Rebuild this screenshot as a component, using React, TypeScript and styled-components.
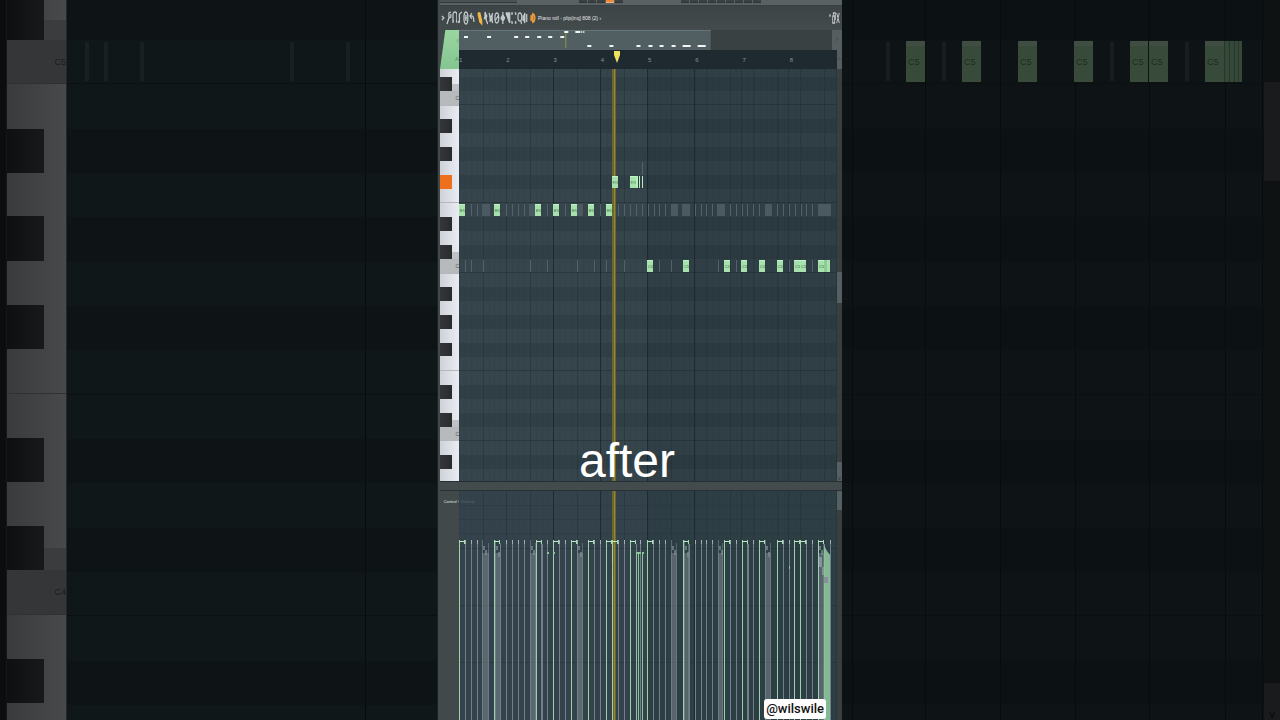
import React from "react";
import styled, { createGlobalStyle } from "styled-components";

const GlobalStyle = createGlobalStyle`
  * { box-sizing: border-box; }
  body { margin: 0; background: #0c1113; font-family: "Liberation Sans", Arial, sans-serif; }
  button { border: 0; padding: 0; background: none; color: inherit; font: inherit; }
`;

const NARROW = '"Liberation Sans Narrow", "Liberation Sans", Arial, sans-serif';

/* ---------- data ---------- */

type KeyKind = "white" | "black" | "c" | "cs" | "active" | "f";
interface KeyRow { kind: KeyKind; size: number; label?: string }

const OCTAVE: KeyKind[] = ["cs", "c", "white", "black", "white", "black", "white", "black", "f", "white", "black", "white"];

function buildRows(first: number, size: number, count: number, last: number, octave: number, active = -1): KeyRow[] {
  const rows: KeyRow[] = [];
  let name = octave;
  for (let i = 0; i < count; i++) {
    const kind = OCTAVE[i % 12];
    const row: KeyRow = { kind: i === active ? "active" : kind, size };
    if (kind === "c") row.label = "C" + name--;
    rows.push(row);
  }
  if (first > 0) rows.unshift({ kind: "white", size: first });
  rows[rows.length - 1].size = last;
  return rows;
}

const MAIN_ROWS = buildRows(8, 14, 29, 12, 6, 7).map(r => (r.label ? { ...r, label: "C" } : r));
const BACK_ROWS = buildRows(0, 44, 17, 17, 5).map((r, i) =>
  i === 0 ? { ...r, size: 40 } : i === 16 ? r : { ...r, size: i % 3 === 2 ? 45 : 44 }
);

const isDark = (k: KeyKind) => k === "black" || k === "cs" || k === "active";

const BARS = [47, 94, 141, 188, 235, 282, 329, 377];
const BEATS = [24, 71, 118, 165, 212, 247, 271, 294, 318, 341, 365];

const NOTES = [
  { y: 107, name: "F#5", xs: [153, 171] },
  { y: 135, name: "E5", xs: [0, 35, 76, 94, 112, 129, 147] },
  { y: 191, name: "C5", xs: [188, 224, 265, 282, 300, 318, 335, 341, 359] },
];
const SHORT_NOTES = [177, 180, 183];
const GHOST_TOP = [12, 18, 47, 53, 59, 65, 88, 106, 141, 159, 165, 171, 177, 183, 189, 195, 200, 206, 236, 242, 247, 253, 271, 277, 283, 288, 294, 300, 318, 324, 330, 336, 342, 347, 353];
const GHOST_TOP_WIDE = [[23, 8], [70, 6], [118, 6], [212, 7], [223, 8], [258, 8], [306, 7], [359, 13]];
const GHOST_LOW = [6, 12, 24, 71, 88, 118, 135, 147, 153, 165, 200, 212, 259, 277, 330, 353];

const STEMS = [6, 12, 18, 47, 53, 59, 65, 82, 88, 100, 106, 118, 135, 141, 159, 165, 181, 194, 200, 206, 236, 242, 247, 253, 271, 277, 288, 294, 324, 330, 341, 347, 353, 371];
const GREEN_STEMS = [0, 35, 77, 94, 112, 129, 147, 153, 171, 188, 224, 265, 283, 300, 318, 335, 341, 359];
const BANDS = [[23, 7], [36, 6], [71, 6], [118, 6], [212, 6], [225, 5], [259, 5], [306, 6], [359, 6]];

const PREVIEW_HIGH = [5, 28, 55, 66, 78, 89, 101];
const PREVIEW_LOW = [[128, 4], [150, 4], [177, 4], [189, 4], [200, 4], [212, 4], [223, 8], [238, 8]];

/* ---------- page ---------- */

const Stage = styled.main`
  display: grid;
  grid-template-columns: minmax(0, 1fr) minmax(0, 404px) minmax(0, 1fr);
  min-height: 100vh;
  overflow: hidden;
`;

const Backdrop = styled.section`
  display: flex;
  min-width: 0;
  background: #0d1315;
`;

const Drawing = styled.svg`
  display: block;
  flex: 1;
  min-width: 0;
  width: 100%;
  height: 100%;
`;

const CanvasCell = styled.div`
  position: relative;
  flex: 1;
  min-width: 0;
  > svg { position: absolute; inset: 0; }
`;

const BackEdge = styled.div`
  flex: 0 0 7px;
  background: #0b0d0e;
  border-right: 1px solid #141718;
`;

/* ---------- keyboard ---------- */

const Keyboard = styled.div<{ $dim?: boolean }>`
  display: flex;
  flex-direction: column;
  flex: 0 0 ${p => (p.$dim ? 60 : 19)}px;
  min-width: 0;
  background: ${p => (p.$dim ? "linear-gradient(90deg, #3a3b3c, #48494b)" : "linear-gradient(90deg, #ced2d8, #e9ecf2)")};
  border-right: ${p => (p.$dim ? "1px solid #23282a" : "0")};
`;

const Key = styled.div<{ $kind: KeyKind; $size: number; $dim?: boolean }>`
  display: flex;
  align-items: center;
  justify-content: space-between;
  flex: ${p => p.$size} 0 0;
  min-height: 0;
  background: ${p => {
    const shade = p.$dim ? "#353637" : "#b7babd";
    if (p.$kind === "c") return shade;
    if (p.$kind === "cs") return `linear-gradient(transparent 50%, ${p.$dim ? "#3b3c3d" : "#bfc2c5"} 50%)`;
    return "none";
  }};
  border-bottom: ${p => (p.$kind === "c" || p.$kind === "f" ? `1px solid ${p.$dim ? "#303132" : "#b4b7ba"}` : "0")};
`;

const BlackKey = styled.span<{ $on?: boolean; $dim?: boolean }>`
  align-self: stretch;
  width: 63%;
  background: ${p => (p.$on ? "#ee6f1c" : p.$dim ? "linear-gradient(90deg, #0e0f10, #18191a)" : "linear-gradient(90deg, #343639, #2a2b2d)")};
`;

const KeyName = styled.span<{ $dim?: boolean }>`
  margin-left: auto;
  white-space: nowrap;
  font: ${p => (p.$dim ? "9px" : "5px")}/12px ${NARROW};
  color: ${p => (p.$dim ? "#1b1c1d" : "#55585b")};
`;

function Keys({ rows, dim }: { rows: KeyRow[]; dim?: boolean }) {
  return (
    <Keyboard $dim={dim}>
      {rows.map((r, i) => (
        <Key key={i} $kind={r.kind} $size={r.size} $dim={dim}>
          {isDark(r.kind) && <BlackKey $on={r.kind === "active"} $dim={dim} />}
          {r.label && <KeyName $dim={dim}>{r.label}</KeyName>}
        </Key>
      ))}
    </Keyboard>
  );
}

function Lanes({ rows, width, light, dark, line }: { rows: KeyRow[]; width: number; light: string; dark: string; line: string }) {
  let y = 0;
  return (
    <g shapeRendering="crispEdges">
      {rows.map((r, i) => {
        const top = y;
        y += r.size;
        return (
          <g key={i}>
            <rect x={0} y={top} width={width} height={r.size} fill={isDark(r.kind) ? dark : light} />
            {(r.kind === "c" || r.kind === "f") && <rect x={0} y={top + r.size - 1} width={width} height={1} fill={line} />}
          </g>
        );
      })}
    </g>
  );
}

/* ---------- plugin window ---------- */

const Window = styled.section`
  position: relative;
  display: flex;
  flex-direction: column;
  min-width: 0;
  padding-left: 2px;
  background: #42494b;
  border-left: 1px solid #1b2022;
  margin-left: -1px;
`;

const HostBar = styled.div`
  display: flex;
  align-items: flex-start;
  height: 6px;
  background: #596163;
  border-bottom: 1px solid #3a4042;
`;

const HostSlot = styled.span`
  width: 77px;
  height: 3px;
  background: #4c5355;
  border-bottom: 1px solid #33393b;
`;

const HostSteps = styled.div<{ $left: number }>`
  display: flex;
  gap: 1px;
  margin-left: ${p => p.$left}px;
`;

const HostStep = styled.span<{ $on?: boolean }>`
  width: 8px;
  height: 3px;
  background: ${p => (p.$on ? "#f08a3c" : "#3b4143")};
  border-bottom: 1px solid ${p => (p.$on ? "#f6b27c" : "#2f3436")};
`;

const Toolbar = styled.header`
  display: flex;
  align-items: center;
  height: 24px;
  background: linear-gradient(#3d4446, #444b4d);
`;

const Tools = styled.div<{ $width: number }>`
  display: flex;
  width: ${p => p.$width}px;
  margin-right: 2px;
`;

const Tool = styled.button<{ $tint?: string }>`
  flex: 1;
  min-width: 0;
  height: 16px;
  color: ${p => p.$tint ?? "#c3c9ca"};
  svg { display: block; width: 100%; height: 16px; fill: none; stroke: currentColor; }
`;

const Title = styled.h1`
  flex: 1;
  margin: 0;
  font: 400 5px/12px ${NARROW};
  color: #e2e6e7;
  white-space: nowrap;
`;

const Header = styled.div`
  display: flex;
  height: 39px;
`;

const Tab = styled.button`
  display: flex;
  flex-direction: column;
  justify-content: space-around;
  flex: 0 0 19px;
  text-align: right;
  font-size: 6px;
  line-height: 10px;
  color: #5a9465;
  background: linear-gradient(#9ad6a2, #84c590);
  clip-path: polygon(28% 0, 100% 0, 100% 100%, 0 100%);
`;

const HeaderTracks = styled.div`
  display: flex;
  flex-direction: column;
  flex: 1;
  min-width: 0;
`;

const Overview = styled.div`
  display: flex;
  height: 20px;
  background: #3a4143;
`;

const ScrollButton = styled.button<{ $width: number }>`
  flex: 0 0 ${p => p.$width}px;
  background: #565e60;
  color: #3a4143;
  font-size: 7px;
  line-height: 8px;
`;

const Ruler = styled.div`
  display: flex;
  height: 19px;
  background: #1e2a30;
`;

const RulerTrack = styled.div`
  position: relative;
  display: flex;
  flex: 1;
  min-width: 0;
`;

const BarNumber = styled.span`
  flex: 1;
  min-width: 0;
  padding-top: 1px;
  font: 6px/19px ${NARROW};
  color: #84939a;
`;

const Marker = styled.svg`
  position: absolute;
  left: 41%;
  top: 1px;
  width: 6px;
  height: 12px;
`;

const Roll = styled.div`
  display: flex;
  flex: 1;
  min-height: 0;
`;

const Divider = styled.div`
  height: 9px;
  background: #444b4c;
  border-top: 1px solid #262f33;
`;

const Control = styled.div`
  display: flex;
  height: 230px;
  border-top: 1px solid #263036;
`;

const ControlSide = styled.div`
  width: 19px;
  flex: none;
  padding-top: 5px;
  text-align: right;
  background: #42494b;
  font: 4px/12px ${NARROW};
  color: #dfe3e4;
  white-space: nowrap;
`;

const VelocityName = styled.span`
  position: absolute;
  left: 2px;
  top: 5px;
  font: 4px/12px ${NARROW};
  color: #566770;
`;

const Scrollbar = styled.div<{ $wide?: boolean }>`
  display: flex;
  flex-direction: column;
  flex: 0 0 ${p => (p.$wide ? 16 : 5)}px;
  background: ${p => (p.$wide ? "#0e1212" : "#393f41")};
`;

const Spacer = styled.div<{ $grow: number }>`
  flex: ${p => p.$grow} 0 0;
`;

const Thumb = styled.div<{ $grow: number; $dim?: boolean }>`
  flex: ${p => p.$grow} 0 0;
  display: flex;
  align-items: flex-end;
  justify-content: center;
  font-size: ${p => (p.$dim ? 10 : 6)}px;
  color: ${p => (p.$dim ? "#050707" : "#30373a")};
  background: ${p => (p.$dim ? "#191b1c" : "#566063")};
`;

const Caption = styled.p`
  position: absolute;
  left: 0;
  right: 26px;
  bottom: 231px;
  margin: 0;
  text-align: center;
  font: 48px/56px "Liberation Sans", Arial, sans-serif;
  color: #fff;
`;

const Handle = styled.a`
  position: absolute;
  right: 16px;
  bottom: 1px;
  padding: 0 2px;
  border-radius: 3px;
  background: #fff;
  color: #111;
  font: 500 13px/20px Roboto, "Liberation Sans", sans-serif;
  text-decoration: none;
`;

const LEFT_TOOLS = [
  { name: "Menu", d: "M2 6l2 2-2 2" },
  { name: "Tools", d: "M1 14l2-6M3 8V3l2-1M5 4v3L3 8" },
  { name: "Snap", d: "M1 13V5q0-3 2-3t2 3v8M1 11h1M4 11h1" },
  { name: "Stamp", d: "M1 12h1.500V4L5 2M1 11l1 2" },
  { name: "Ghost notes", d: "M3 2q-2 0-2 6t2 6 2-6-2-6M3 5v6M2 8h2" },
  { name: "Undo", d: "M3 3L1 6l2 3M1 6h2q2 0 2 6" },
];
const EDIT_TOOLS = [
  { name: "Draw", d: "M1 3l2 0 2 8v3L3 12 1 3M2 6h2M3 9h2", tint: "#f0b64a", solid: true },
  { name: "Paint", d: "M2 2l2 4-1 3 2 5M1 9l2-2-1-5", solid: true },
  { name: "Slice", d: "M1 3l2 5-1 4M5 3L3 8l2 5", solid: true },
  { name: "Mute", d: "M3 3q-2 0-2 5t2 5 2-5-2-5M1 11l4-6" },
  { name: "Slip", d: "M3 2v12M1 8l2-3 2 3-2 3z", solid: true },
  { name: "Cut", d: "M1 3h4v10M1 3l4 10M3 3l2 5", solid: true },
  { name: "Select", d: "M1 5V3h1M4 3h1v2M5 11v2H4M2 13H1v-2" },
  { name: "Zoom", d: "M3 3q-2 0-2 4t2 4 2-4-2-4M4 11l1 3" },
  { name: "Playback", d: "M1 6v4h1l1 3V3L2 6zM5 4v8", solid: true },
];

function ToolButton({ name, d, tint, solid }: { name: string; d: string; tint?: string; solid?: boolean }) {
  return (
    <Tool type="button" aria-label={name} $tint={tint}>
      <svg viewBox="0 0 6 16" preserveAspectRatio="none">
        <path d={d} fill={solid ? "currentColor" : "none"} strokeWidth={1.3} />
      </svg>
    </Tool>
  );
}

function Playhead({ height }: { height: number }) {
  return (
    <g>
      <rect x={153} y={0} width={4} height={height} fill="#6c672d" />
      <rect x={155} y={0} width={1} height={height} fill="#8f8732" />
    </g>
  );
}

function GridLines({ height }: { height: number }) {
  return (
    <g shapeRendering="crispEdges">
      {Array.from({ length: 64 }, (_, i) => (
        <rect key={i} x={Math.round(i * 5.9)} y={0} width={1} height={height} fill="#1c2a31" opacity={0.07} />
      ))}
      {BEATS.map(x => <rect key={x} x={x} y={0} width={1} height={height} fill="#1c2a31" opacity={0.3} />)}
      {BARS.map((x, i) => <rect key={x} x={x} y={0} width={1} height={height} fill="#1a262c" opacity={i > 0 && i < 5 ? 0.8 : 0.3} />)}
    </g>
  );
}

function NoteCanvas() {
  return (
    <Drawing viewBox="0 0 378 412" preserveAspectRatio="none" role="img" aria-label="Notes">
      <Lanes rows={MAIN_ROWS} width={378} light="#36444b" dark="#303e46" line="#2a373e" />
      <rect x={188} y={0} width={190} height={412} fill="#1c2c34" opacity={0.24} />
      <GridLines height={412} />
      <g fill="#52616a">
        {GHOST_TOP.map(x => <rect key={x} x={x} y={135} width={1} height={12} />)}
        {GHOST_LOW.map(x => <rect key={x} x={x} y={191} width={1} height={12} />)}
        <rect x={183} y={93} width={1} height={13} />
      </g>
      {GHOST_TOP_WIDE.map(([x, w]) => <rect key={x} x={x} y={135} width={w} height={12} fill="#4b5a61" />)}
      <Playhead height={412} />
      {NOTES.map(row => row.xs.map(x => (
        <g key={x}>
          <rect x={x} y={row.y} width={6} height={12} fill="#a5e2ac" />
          <rect x={x} y={row.y} width={6} height={1} fill="#c3f0c7" />
          <text x={x + 1} y={row.y + 8} fontSize={row.name.length > 2 ? 3 : 4} fontFamily={NARROW} fill="#35603e">{row.name}</text>
        </g>
      )))}
      <g fill="#b5edbb">
        {SHORT_NOTES.map(x => <rect key={x} x={x} y={107} width={x === 177 ? 2 : 1} height={12} />)}
        <rect x={365} y={191} width={3} height={12} fill="#8fcb97" />
        <rect x={368} y={191} width={3} height={12} fill="#a5e2ac" />
      </g>
    </Drawing>
  );
}

function VelocityCanvas() {
  return (
    <Drawing viewBox="0 0 378 229" preserveAspectRatio="none" role="img" aria-label="Velocities">
      <rect width={378} height={229} fill="#34434b" />
      <rect x={188} width={190} height={229} fill="#1c2c34" opacity={0.24} />
      <GridLines height={229} />
      {[14, 28, 42, 57, 114, 171].map(y => <rect key={y} x={0} y={y} width={378} height={1} fill="#1f2c33" opacity={y > 42 ? 0.45 : 0.2} />)}
      {BANDS.map(([x, w], i) => (
        <g key={x} fill="#7f8e96">
          <rect x={x} y={62} width={w} height={167} opacity={0.5} />
          <rect x={x} y={49} width={1} height={180} opacity={0.6} />
          <rect x={x + w - 1} y={52} width={1} height={177} opacity={0.5} />
          <rect x={x + 1} y={55} width={2} height={4} opacity={0.7} />
          <rect x={x + 3} y={59 + (i % 2) * 2} width={2} height={5} opacity={0.7} />
        </g>
      ))}
      {STEMS.map(x => (
        <g key={x}>
          <rect x={x} y={50} width={1} height={179} fill="#71818a" />
          <rect x={x} y={49} width={1} height={4} fill="#a0afb3" />
        </g>
      ))}
      <Playhead height={229} />
      {GREEN_STEMS.map(x => (
        <g key={x} fill="#9bd2a9">
          <rect x={x} y={49} width={1} height={180} />
          <rect x={x} y={50} width={6} height={1} fill="#b5eebd" />
          <rect x={x + 5} y={49} width={1} height={4} fill="#a9dcb4" />
          <rect x={x + 6} y={53} width={1} height={176} fill="#71818a" />
        </g>
      ))}
      <g fill="#8fc59c">
        {[177, 179, 183].map(x => <rect key={x} x={x} y={61} width={1} height={168} />)}
        {[177, 180, 183, 88, 94].map(x => <rect key={x} x={x} y={61} width={2} height={2} />)}
        <rect x={153} y={75} width={1} height={3} />
        <rect x={330} y={75} width={1} height={3} />
        <path d="M365 54l3 6 3 4v165h-6z" opacity={0.9} />
        <path d="M360 66h3v10h2v10h4v6h-4v-8h-2v-8h-3z" fill="#84939a" />
      </g>
    </Drawing>
  );
}

function OverviewCanvas() {
  return (
    <Drawing viewBox="0 0 372 20" preserveAspectRatio="none" role="img" aria-label="Overview">
      <rect width={251} height={20} fill="#525f62" />
      <rect width={251} height={1} fill="#66757a" />
      <rect x={106} y={3} width={1} height={15} fill="#8f9140" />
      <g fill="#f1f6f4">
        {PREVIEW_HIGH.map(x => <rect key={x} x={x} y={6} width={4} height={2} />)}
        {PREVIEW_LOW.map(([x, w]) => <rect key={x} x={x} y={15} width={w} height={2} />)}
        <rect x={105} y={1} width={4} height={2} />
        <rect x={116} y={1} width={5} height={2} />
        <rect x={122} y={1} width={1} height={2} />
        <rect x={124} y={1} width={1} height={2} />
      </g>
    </Drawing>
  );
}

function BackLeft() {
  return (
    <Backdrop aria-hidden="true">
      <BackEdge />
      <Keys rows={BACK_ROWS} dim />
      <CanvasCell>
        <Drawing viewBox="0 0 371 720" preserveAspectRatio="none">
          <Lanes rows={BACK_ROWS} width={371} light="#101719" dark="#0e1416" line="#0b1113" />
          <rect x={298} y={0} width={1} height={720} fill="#080c0e" />
          {[18, 37, 73, 223, 279].map(x => <rect key={x} x={x} y={42} width={4} height={39} fill="#192022" />)}
        </Drawing>
      </CanvasCell>
    </Backdrop>
  );
}

function BackRight() {
  return (
    <Backdrop aria-hidden="true">
      <CanvasCell>
        <Drawing viewBox="0 0 422 720" preserveAspectRatio="none">
          <Lanes rows={BACK_ROWS} width={422} light="#0e1416" dark="#0c1113" line="#0a0f11" />
          {[10, 83, 158, 233, 307, 383, 420].map(x => <rect key={x} x={x} y={0} width={1} height={720} fill="#080c0d" />)}
          {[44, 100, 268, 343].map(x => <rect key={x} x={x} y={42} width={4} height={39} fill="#181e20" />)}
          {[64, 120, 176, 232, 288, 307, 363].map(x => (
            <g key={x}>
              <rect x={x} y={41} width={x === 288 ? 18 : 19} height={41} fill="#384b3b" />
              <rect x={x} y={41} width={x === 288 ? 18 : 19} height={5} fill="#3f4d42" />
              <text x={x + 2} y={65} fontSize={9} fontFamily={NARROW} fill="#1d2d20">C5</text>
            </g>
          ))}
          <rect x={382} y={41} width={18} height={41} fill="#35483a" />
          {[382, 387, 392, 396].map(x => <rect key={x} x={x} y={41} width={1} height={41} fill="#26362a" />)}
        </Drawing>
      </CanvasCell>
      <Scrollbar $wide>
        <Spacer $grow={82} />
        <Thumb $grow={99} $dim />
        <Spacer $grow={502} />
        <Thumb $grow={37} $dim>v</Thumb>
      </Scrollbar>
    </Backdrop>
  );
}

export default function App() {
  return (
    <>
      <GlobalStyle />
      <Stage>
        <BackLeft />
        <Window>
          <HostBar>
            <HostSlot />
            <HostSteps $left={62}>
              {[0, 1, 2, 3, 4].map(i => <HostStep key={i} $on={i === 3} />)}
            </HostSteps>
            <HostSteps $left={58}>
              {[0, 1, 2, 3, 4, 5, 6, 7, 8].map(i => <HostStep key={i} />)}
            </HostSteps>
          </HostBar>
          <Toolbar>
            <Tools $width={35}>{LEFT_TOOLS.map(t => <ToolButton key={t.name} {...t} />)}</Tools>
            <Tools $width={51}>{EDIT_TOOLS.map(t => <ToolButton key={t.name} {...t} />)}</Tools>
            <Tools $width={6}><ToolButton name="Channel" d="M1 6v4h1l1 3V3L2 6zM4 4l1 4-1 4" tint="#ee9a3a" solid /></Tools>
            <Title>Piano roll - plip(inq] 808 (2) ›</Title>
            <Tools $width={12}>
              <ToolButton name="Minimize" d="M2 5h2M2 6h2" />
              <ToolButton name="Maximize" d="M1 6h3v7H1zM2 5V3h3v7" />
              <ToolButton name="Close" d="M1 3l4 10M5 3L1 13" />
            </Tools>
          </Toolbar>
          <Header>
            <Tab type="button" aria-label="Scale and chords"><span>♪</span><span>A</span></Tab>
            <HeaderTracks>
              <Overview>
                <CanvasCell><OverviewCanvas /></CanvasCell>
                <ScrollButton type="button" $width={10} aria-label="Scroll right">›</ScrollButton>
              </Overview>
              <Ruler>
                <RulerTrack>
                  {[1, 2, 3, 4, 5, 6, 7, 8].map(n => <BarNumber key={n}>{n}</BarNumber>)}
                  <Marker viewBox="0 0 6 12" aria-hidden="true"><path d="M0 0h6v4L3 12 0 4z" fill="#efe25e" /></Marker>
                </RulerTrack>
                <ScrollButton type="button" $width={5} aria-label="Scroll up">^</ScrollButton>
              </Ruler>
            </HeaderTracks>
          </Header>
          <Roll>
            <Keys rows={MAIN_ROWS} />
            <CanvasCell><NoteCanvas /></CanvasCell>
            <Scrollbar>
              <Spacer $grow={203} />
              <Thumb $grow={31} />
              <Spacer $grow={159} />
              <Thumb $grow={19}>v</Thumb>
            </Scrollbar>
          </Roll>
          <Divider />
          <Control>
            <ControlSide>Control ›</ControlSide>
            <CanvasCell>
              <VelocityCanvas />
              <VelocityName>Velocity</VelocityName>
            </CanvasCell>
            <Scrollbar>
              <Thumb $grow={19} />
              <Spacer $grow={210} />
            </Scrollbar>
          </Control>
          <Caption>after</Caption>
          <Handle href="#wilswile">@wilswile</Handle>
        </Window>
        <BackRight />
      </Stage>
    </>
  );
}
